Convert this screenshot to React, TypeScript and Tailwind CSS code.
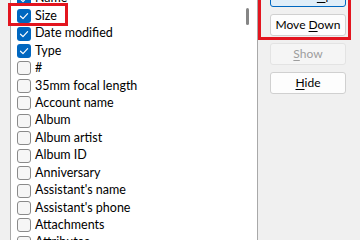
import React from "react";

const items: { label: string; checked: boolean }[] = [
  { label: "Name", checked: true },
  { label: "Size", checked: true },
  { label: "Date modified", checked: true },
  { label: "Type", checked: true },
  { label: "#", checked: false },
  { label: "35mm focal length", checked: false },
  { label: "Account name", checked: false },
  { label: "Album", checked: false },
  { label: "Album artist", checked: false },
  { label: "Album ID", checked: false },
  { label: "Anniversary", checked: false },
  { label: "Assistant's name", checked: false },
  { label: "Assistant's phone", checked: false },
  { label: "Attachments", checked: false },
  { label: "Attributes", checked: false },
];

function Box({ checked }: { checked: boolean }) {
  if (checked) {
    return (
      <span className="w-[14px] h-[14px] rounded-[3px] bg-[#0067c0] flex items-center justify-center shrink-0">
        <svg width="10" height="10" viewBox="0 0 10 10" fill="none">
          <path d="M1.5 5.2L4 7.6L8.6 2.6" stroke="#fff" strokeWidth="1.2" strokeLinecap="round" strokeLinejoin="round" />
        </svg>
      </span>
    );
  }
  return <span className="w-[14px] h-[14px] rounded-[3px] bg-[#f6f6f6] border border-[#8a8a8a] shrink-0" />;
}

function Btn({ pre, key1, post, primary, disabled }: { pre: string; key1: string; post: string; primary?: boolean; disabled?: boolean }) {
  const cls = primary
    ? "bg-[#e0eef9] border-[#0067c0] text-black"
    : disabled
    ? "bg-[#f5f5f5] border-[#e3e3e3] text-[#9d9d9d]"
    : "bg-[#fdfdfd] border-[#d0d0d0] text-black";
  return (
    <div className={`w-[76px] h-[22px] rounded-[3px] border flex items-center justify-center text-[12px] ${cls}`}>
      <span>
        {pre}
        <span className="underline underline-offset-2">{key1}</span>
        {post}
      </span>
    </div>
  );
}

export default function App() {
  return (
    <div className="relative w-[360px] h-[240px] overflow-hidden bg-[#f0f0f0] flex font-['Lato',sans-serif]">
      <div className="w-[10px] shrink-0" />
      <div className="relative w-[248px] h-full bg-white border-l border-r border-[#a9a9a9] shrink-0">
        <div className="flex flex-col mt-[-10px] pl-[6px]">
          {items.map((it) => (
            <div key={it.label} className="h-[17.45px] flex items-center gap-[4px] text-[12.5px] text-black whitespace-nowrap">
              <Box checked={it.checked} />
              <span>{it.label}</span>
            </div>
          ))}
        </div>
        <div className="absolute right-[8px] top-[8px] w-[3px] h-[17px] rounded-full bg-[#858585]" />
      </div>
      <div className="flex flex-col gap-[7px] pl-[12px] mt-[-15px]">
        <Btn pre="Move " key1="U" post="p" primary />
        <Btn pre="Move " key1="D" post="own" />
        <Btn pre="" key1="S" post="how" disabled />
        <Btn pre="" key1="H" post="ide" />
      </div>
      <div className="absolute left-[8px] top-[3px] w-[60px] h-[23px] border-[3px] border-[#e3151f]" />
      <div className="absolute left-[258px] top-[-20px] w-[93px] h-[60px] border-[3px] border-[#e3151f]" />
    </div>
  );
}
